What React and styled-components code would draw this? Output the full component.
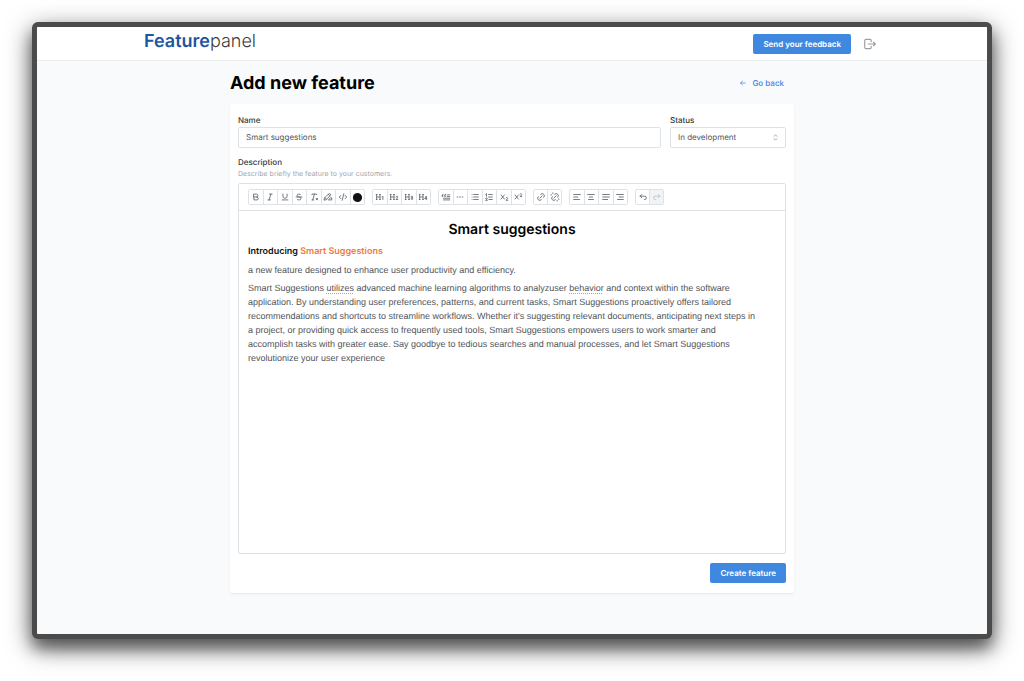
import React from "react";
import styled, { createGlobalStyle } from "styled-components";
import {
  TbBold, TbItalic, TbUnderline, TbStrikethrough, TbClearFormatting, TbHighlight,
  TbCode, TbCircleFilled, TbH1, TbH2, TbH3, TbH4, TbBlockquote, TbLineDashed, TbList,
  TbListNumbers, TbSubscript, TbSuperscript, TbLink, TbUnlink, TbAlignLeft,
  TbAlignCenter, TbAlignJustified, TbAlignRight, TbArrowBackUp, TbArrowForwardUp,
  TbSelector, TbLogout, TbArrowLeft,
} from "react-icons/tb";

const GlobalStyle = createGlobalStyle`
  *, *::before, *::after { box-sizing: border-box; }
  body {
    margin: 0;
    background: #fff;
    color: #212529;
    font-family: Inter, "Liberation Sans", sans-serif;
    font-size: 8px;
    line-height: 12px;
    text-rendering: geometricPrecision;
  }
  button, input, select { font: inherit; color: inherit; text-rendering: inherit; }
  h1, h2, p { margin: 0; }
`;

const Desktop = styled.div`
  display: flex;
  min-height: 100vh;
  padding: 22px 32px 42px;
`;

const Window = styled.div`
  flex: 1;
  display: flex;
  flex-direction: column;
  min-width: 0;
  overflow: hidden;
  border: 5px solid #4b4b4b;
  border-radius: 6px;
  background: #f8fafb;
  box-shadow: 0 8px 26px rgba(0, 0, 0, 0.6), 0 10px 14px rgba(0, 0, 0, 0.35);
`;

const Header = styled.header`
  background: #fff;
  border-bottom: 1px solid #eceff1;
`;

const HeaderInner = styled.div`
  display: flex;
  align-items: center;
  gap: 9px;
  height: 33px;
  max-width: 736px;
  margin: 0 auto;
`;

const Logo = styled.a`
  margin-right: auto;
  padding-bottom: 4px;
  color: #1d559f;
  font-size: 18px;
  font-weight: 600;
  line-height: 22px;
  text-decoration: none;

  span { color: #3d3d3d; font-weight: 300; }
`;

const PrimaryButton = styled.button`
  height: 20px;
  padding: 0 10px;
  border: 0;
  border-radius: 2px;
  background: #4088df;
  color: #fff;
  font-size: 8px;
  font-weight: 600;
  line-height: 20px;
  white-space: nowrap;
`;

const IconButton = styled.button`
  display: grid;
  place-items: center;
  width: 20px;
  height: 20px;
  padding: 0;
  border: 0;
  background: none;
  color: #999fa5;
`;

const Main = styled.main`
  width: 100%;
  max-width: 564px;
  margin: 0 auto;
  padding: 10px 0 40px;
`;

const TitleRow = styled.div`
  display: flex;
  align-items: center;
  justify-content: space-between;
  padding-right: 10px;
`;

const Title = styled.h1`
  color: #000;
  font-size: 18px;
  font-weight: 700;
  line-height: 25px;
`;

const BackLink = styled.a`
  display: flex;
  align-items: center;
  gap: 5px;
  padding-bottom: 2px;
  color: #4583df;
  font-weight: 500;
  text-decoration: none;
`;

const Card = styled.form`
  margin-top: 8px;
  padding: 10px 8px;
  border-radius: 2px;
  background: #fff;
  box-shadow: 0 1px 2px rgba(0, 0, 0, 0.08);
`;

const FieldRow = styled.div`
  display: grid;
  grid-template-columns: 1fr 116px;
  gap: 9px;
`;

const Label = styled.label`
  display: block;
  color: #33383d;
  font-weight: 500;
  line-height: 13px;
`;

const Control = styled.div`
  position: relative;
  color: #50565c;

  input, select {
    display: block;
    width: 100%;
    height: 21px;
    padding: 0 7px 1px;
    border: 1px solid #dee2e6;
    border-radius: 2px;
    background: #fff;
    appearance: none;
    outline: none;
  }

  svg {
    position: absolute;
    top: 6px;
    right: 6px;
    color: #868e96;
    pointer-events: none;
  }
`;

const Description = styled.div`
  margin-top: 8px;
`;

const Hint = styled.p`
  color: #9fa5ab;
  font-size: 7px;
  line-height: 9px;
`;

const Editor = styled.div`
  margin-top: 5px;
  border: 1px solid #dee2e6;
  border-radius: 2px;
`;

const Toolbar = styled.div`
  display: flex;
  flex-wrap: wrap;
  gap: 7px;
  padding: 5px 9px;
  border-bottom: 1px solid #dee2e6;
`;

const ToolGroup = styled.div`
  display: flex;
  width: ${(p) => p.$width}px;
  height: 16px;
  border: 1px solid #dee2e6;
  border-radius: 2px;
  overflow: hidden;
`;

const Tool = styled.button`
  display: flex;
  flex: 1 1 0;
  align-items: center;
  justify-content: center;
  min-width: 0;
  padding: 0;
  border: 0;
  background: #fff;
  color: #5c6268;

  & + & { border-left: 1px solid #dee2e6; }
  &:disabled { background: #f1f3f5; color: #b8bec4; }
  svg { flex: none; }
`;

const Content = styled.div`
  min-height: 342px;
  padding: 8px 9px;
  outline: none;
  color: #50555a;
  font-size: 9px;
  line-height: 14px;

  h2 {
    margin-bottom: 4px;
    color: #000;
    font-size: 14px;
    font-weight: 600;
    line-height: 22px;
    text-align: center;
  }
  p + p {
    max-width: 512px;
    margin-top: 4px;
    font-family: "Liberation Sans", Arial, sans-serif;
  }
  strong { color: #111; font-weight: 600; }
`;

const Accent = styled.span`
  color: #ee7a3b;
`;

const Misspelled = styled.span`
  text-decoration: underline dotted #e58a8a 1px;
  text-underline-offset: 2px;
`;

const Footer = styled.div`
  display: flex;
  justify-content: flex-end;
  margin-top: 9px;
`;

const toolGroups = [
  {
    width: 117,
    tools: [
      ["Bold", TbBold], ["Italic", TbItalic], ["Underline", TbUnderline],
      ["Strikethrough", TbStrikethrough], ["Clear formatting", TbClearFormatting],
      ["Highlight", TbHighlight], ["Code", TbCode], ["Text color", TbCircleFilled],
    ],
  },
  { width: 59, tools: [["Heading 1", TbH1], ["Heading 2", TbH2], ["Heading 3", TbH3], ["Heading 4", TbH4]] },
  {
    width: 88,
    tools: [
      ["Blockquote", TbBlockquote], ["Horizontal line", TbLineDashed], ["Bullet list", TbList],
      ["Ordered list", TbListNumbers], ["Subscript", TbSubscript], ["Superscript", TbSuperscript],
    ],
  },
  { width: 29, tools: [["Link", TbLink], ["Remove link", TbUnlink]] },
  {
    width: 59,
    tools: [
      ["Align left", TbAlignLeft], ["Align center", TbAlignCenter],
      ["Justify", TbAlignJustified], ["Align right", TbAlignRight],
    ],
  },
  { width: 29, tools: [["Undo", TbArrowBackUp], ["Redo", TbArrowForwardUp]] },
];

function ToolbarButton({ label, icon: Icon }) {
  const isColor = label === "Text color";
  return (
    <Tool type="button" aria-label={label} disabled={label === "Redo"}>
      <Icon size={isColor ? 11 : 10} strokeWidth={isColor ? 0 : 2} color={isColor ? "#111" : undefined} />
    </Tool>
  );
}

export default function App() {
  return (
    <>
      <GlobalStyle />
      <Desktop>
        <Window>
          <Header>
            <HeaderInner>
              <Logo href="#home">Feature<span>panel</span></Logo>
              <PrimaryButton type="button">Send your feedback</PrimaryButton>
              <IconButton type="button" aria-label="Log out"><TbLogout size={14} strokeWidth={2} /></IconButton>
            </HeaderInner>
          </Header>
          <Main>
            <TitleRow>
              <Title>Add new feature</Title>
              <BackLink href="#back"><TbArrowLeft size={8} />Go back</BackLink>
            </TitleRow>
            <Card onSubmit={(e) => e.preventDefault()}>
              <FieldRow>
                <div>
                  <Label htmlFor="name">Name</Label>
                  <Control><input id="name" defaultValue="Smart suggestions" /></Control>
                </div>
                <div>
                  <Label htmlFor="status">Status</Label>
                  <Control>
                    <select id="status" defaultValue="In development">
                      <option>In development</option>
                      <option>Planned</option>
                      <option>Released</option>
                    </select>
                    <TbSelector size={9} />
                  </Control>
                </div>
              </FieldRow>
              <Description>
                <Label as="div" id="description">Description</Label>
                <Hint>Describe briefly the feature to your customers.</Hint>
                <Editor>
                  <Toolbar role="toolbar">
                    {toolGroups.map((group) => (
                      <ToolGroup key={group.tools[0][0]} $width={group.width}>
                        {group.tools.map(([label, icon]) => (
                          <ToolbarButton key={label} label={label} icon={icon} />
                        ))}
                      </ToolGroup>
                    ))}
                  </Toolbar>
                  <Content
                    role="textbox"
                    aria-multiline="true"
                    aria-labelledby="description"
                    contentEditable
                    suppressContentEditableWarning
                    spellCheck={false}
                  >
                    <h2>Smart suggestions</h2>
                    <p><strong>Introducing <Accent>Smart Suggestions</Accent></strong></p>
                    <p>a new feature designed to enhance user productivity and efficiency.</p>
                    <p>
                      Smart Suggestions <Misspelled>utilizes</Misspelled> advanced machine learning algorithms to
                      analyzuser <Misspelled>behavior</Misspelled> and context within the software application. By
                      understanding user preferences, patterns, and current tasks, Smart Suggestions proactively
                      offers tailored recommendations and shortcuts to streamline workflows. Whether it's suggesting
                      relevant documents, anticipating next steps in a project, or providing quick access to
                      frequently used tools, Smart Suggestions empowers users to work smarter and accomplish tasks
                      with greater ease. Say goodbye to tedious searches and manual processes, and let Smart
                      Suggestions revolutionize your user experience
                    </p>
                  </Content>
                </Editor>
              </Description>
              <Footer><PrimaryButton type="submit">Create feature</PrimaryButton></Footer>
            </Card>
          </Main>
        </Window>
      </Desktop>
    </>
  );
}
